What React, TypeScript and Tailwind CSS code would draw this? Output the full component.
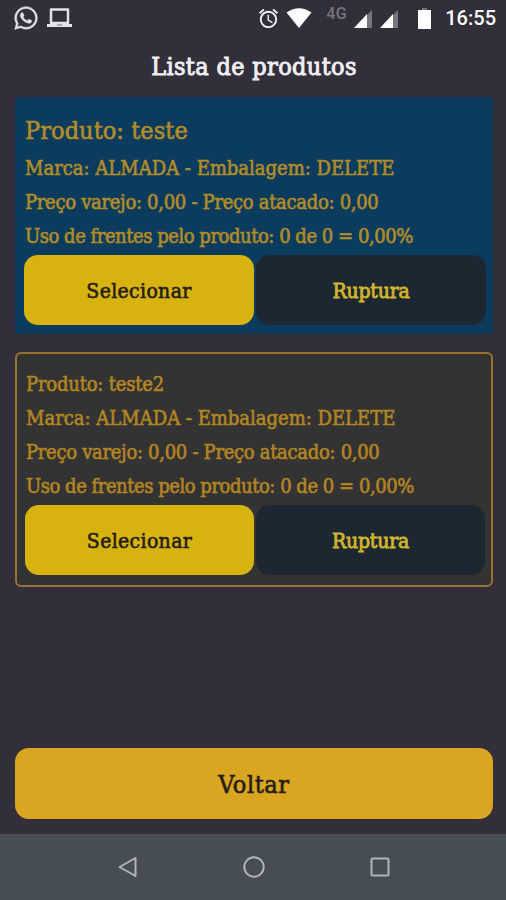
import { FaWhatsapp } from "react-icons/fa";
import { MdAlarm } from "react-icons/md";

const products = [
  {
    id: 1,
    name: "teste",
    brand: "ALMADA",
    pack: "DELETE",
    retail: "0,00",
    wholesale: "0,00",
    usage: "0 de 0 = 0,00%",
    selected: true,
  },
  {
    id: 2,
    name: "teste2",
    brand: "ALMADA",
    pack: "DELETE",
    retail: "0,00",
    wholesale: "0,00",
    usage: "0 de 0 = 0,00%",
    selected: false,
  },
];

function Signal() {
  return (
    <svg width="18" height="18" viewBox="0 0 18 18">
      <path d="M18 0V18H12V6Z" fill="#77747d" />
      <path d="M13 4V18H0Z" fill="#fff" />
    </svg>
  );
}

function StatusBar() {
  return (
    <header className="flex h-9 items-center pr-[10px] pl-[13px] text-white">
      <FaWhatsapp size={26} color="#e4e2e8" strokeWidth={8} stroke="#e4e2e8" />
      <svg width="26" height="20" viewBox="0 0 26 20" className="ml-2">
        <path d="M4 1.500H21V15H4Z" fill="none" stroke="#e4e2e8" strokeWidth="2.500" strokeLinejoin="round" />
        <path d="M0 16H25V19H0Z" fill="#e4e2e8" />
        <path d="M10 16.500H15V17.500H10Z" fill="#77747d" />
      </svg>
      <div className="ml-auto flex items-center">
        <MdAlarm size={23} color="#f0eef2" />
        <svg width="26" height="20" viewBox="0 0 26 20" className="ml-1.5">
          <path d="M0.5 4.5Q13 -4 25.500 4.500L13 20Z" fill="#fff" />
        </svg>
        <span className="mb-2 ml-[14px] w-[22px] text-[16px] leading-4 font-medium tracking-[0.4px] text-[#77747d]">
          4G
        </span>
        <div className="mt-0.5 ml-[6px] flex gap-2">
          <Signal />
          <Signal />
        </div>
        <svg width="13" height="21" viewBox="0 0 13 21" className="ml-5">
          <path d="M4 0H9V2H4Z" fill="#77747d" />
          <path d="M0 2H13V21H0Z" fill="#fff" />
        </svg>
        <span className="ml-[14px] text-[20px] leading-6 font-medium">16:55</span>
      </div>
    </header>
  );
}

function ProductCard({ product }: { product: (typeof products)[number] }) {
  return (
    <section
      className={
        product.selected
          ? "h-[237px] rounded-[5px] bg-[#0b3c5d] pr-[7px] pl-[9px] pt-[14px] text-[#b28c27]"
          : "mt-[18px] h-[235px] rounded-[6px] border-2 border-[#977230] bg-[#333333] pr-1.5 pl-2 pt-[13px] text-[#b28522]"
      }
    >
      <div className="pl-px text-[20px] leading-[34px] font-medium whitespace-nowrap">
        <h2 className={product.selected ? "h-10 text-[25px] leading-10 tracking-[0.07px]" : "tracking-[-0.2px]"}>
          Produto: {product.name}
        </h2>
        <p>
          Marca: {product.brand} - Embalagem: {product.pack}
        </p>
        <p className="tracking-[-0.3px]">
          Preço varejo: {product.retail} - Preço atacado: {product.wholesale}
        </p>
        <p className="tracking-[-0.46px]">Uso de frentes pelo produto: {product.usage}</p>
      </div>
      <div className="mt-0.5 flex gap-0.5">
        <button className="h-[70px] flex-1 rounded-[14px] bg-[#d8b20f] pt-1 text-[21px] tracking-[0.35px] text-[#241e14]">
          Selecionar
        </button>
        <button className="h-[70px] flex-1 rounded-[14px] bg-[#1d2731] pt-1 text-[21px] tracking-[-0.2px] text-[#d2b62c] [-webkit-text-stroke:0.8px_currentColor]">
          Ruptura
        </button>
      </div>
    </section>
  );
}

export default function App() {
  return (
    <main className="flex h-[900px] w-[506px] flex-col overflow-hidden bg-[#322e3a] font-['Roboto',sans-serif]">
      <StatusBar />
      <div className="flex flex-1 flex-col pr-[13px] pl-[15px] font-['Roboto_Slab','DejaVu_Serif_Condensed','DejaVu_Serif',serif] [font-stretch:condensed] [-webkit-text-stroke:0.6px_currentColor]">
        <h1 className="h-[61px] text-center text-[25px] leading-[61px] tracking-[0.35px] text-[#f1eff3] [-webkit-text-stroke:0.9px_currentColor]">
          Lista de produtos
        </h1>
        {products.map((product) => (
          <ProductCard key={product.id} product={product} />
        ))}
        <button className="mt-auto mb-[15px] h-[71px] rounded-[14px] bg-[#daa520] pt-0.5 text-[25px] tracking-[0.6px] text-[#241e14]">
          Voltar
        </button>
      </div>
      <nav className="flex h-[66px] items-center justify-center gap-[104px] bg-[#464d55] pl-px">
        <svg width="22" height="24" viewBox="0 0 22 24" fill="none" stroke="#b1b4b7" strokeWidth="2">
          <path d="M18.500 3V21L2.500 12Z" strokeLinejoin="round" />
        </svg>
        <svg width="22" height="24" viewBox="0 0 22 24" fill="none" stroke="#b1b4b7" strokeWidth="2">
          <circle cx="11" cy="12" r="9.700" />
        </svg>
        <svg width="22" height="24" viewBox="0 0 22 24" fill="none" stroke="#b1b4b7" strokeWidth="2">
          <rect x="2.500" y="3.500" width="17" height="17" rx="1" />
        </svg>
      </nav>
    </main>
  );
}
